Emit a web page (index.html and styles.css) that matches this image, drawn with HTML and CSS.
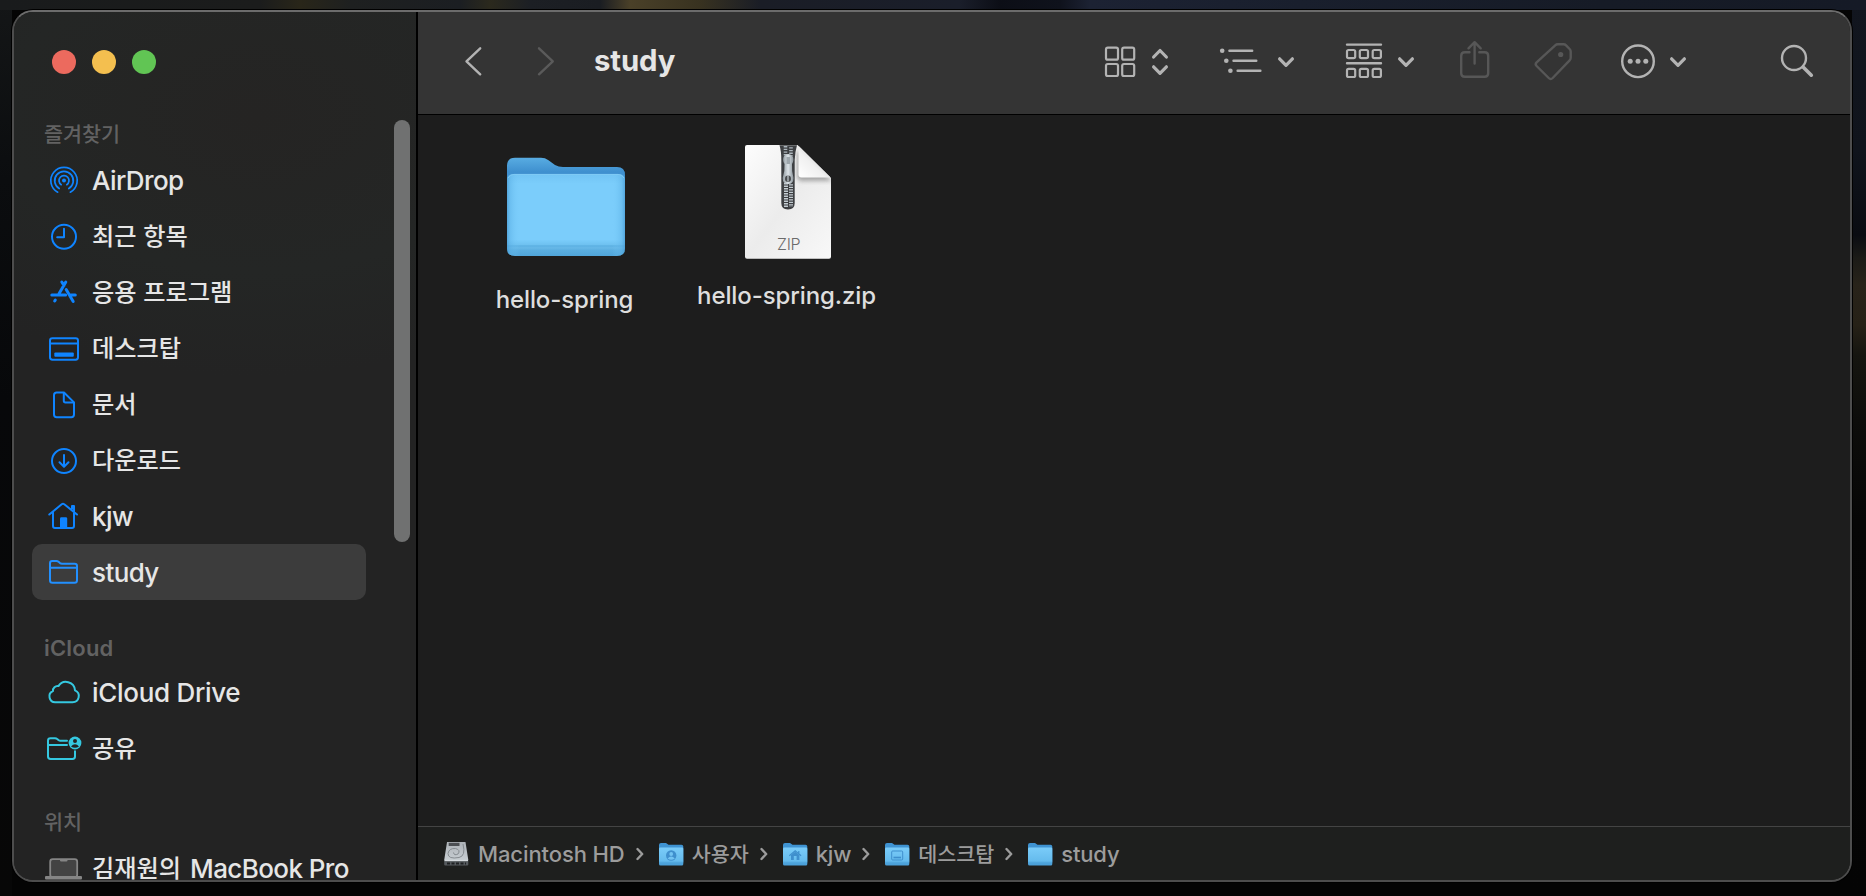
FILE: index.html
```
<!DOCTYPE html>
<html lang="ko">
<head>
<meta charset="utf-8">
<title>study</title>
<link rel="stylesheet" href="styles.css">
</head>
<body>
<svg class="defs" width="0" height="0" aria-hidden="true">
  <defs>
    <linearGradient id="back" x1="0" y1="0" x2="0" y2="1"><stop offset="0" stop-color="#58ace2"/><stop offset=".17" stop-color="#3f90cf"/><stop offset="1" stop-color="#3f90cf"/></linearGradient>
    <linearGradient id="front" x1="0" y1="0" x2="0" y2="1"><stop offset="0" stop-color="#72c4f4"/><stop offset=".12" stop-color="#7bcdfb"/><stop offset=".8" stop-color="#7bcdfb"/><stop offset=".865" stop-color="#6ec1f0"/><stop offset=".875" stop-color="#5bb0e2"/><stop offset=".9" stop-color="#67b8e8"/><stop offset=".93" stop-color="#5aaee0"/><stop offset="1" stop-color="#50a5da"/></linearGradient>
    <linearGradient id="side" x1="0" y1="0" x2="1" y2="0"><stop offset="0" stop-color="#469ad4" stop-opacity=".75"/><stop offset=".03" stop-color="#5bb0e5" stop-opacity=".45"/><stop offset=".11" stop-color="#7bcdfb" stop-opacity="0"/><stop offset=".89" stop-color="#7bcdfb" stop-opacity="0"/><stop offset=".97" stop-color="#5bb0e5" stop-opacity=".45"/><stop offset="1" stop-color="#469ad4" stop-opacity=".75"/></linearGradient>
    <linearGradient id="mini" x1="0" y1="0" x2="0" y2="1"><stop offset="0" stop-color="#7accf9"/><stop offset=".75" stop-color="#65bbed"/><stop offset=".85" stop-color="#4da3db"/><stop offset="1" stop-color="#4a9fd8"/></linearGradient>
    <linearGradient id="paper" x1="0" y1="0" x2="1" y2="1"><stop offset="0" stop-color="#fdfdfd"/><stop offset=".5" stop-color="#ececec"/><stop offset="1" stop-color="#f8f8f8"/></linearGradient>
    <linearGradient id="curl" x1="0" y1="1" x2=".6" y2=".4"><stop offset="0" stop-color="#ffffff"/><stop offset=".7" stop-color="#f0f0f0"/><stop offset="1" stop-color="#d8d8d8"/></linearGradient>
    <linearGradient id="metal" x1="0" y1="0" x2="1" y2="0"><stop offset="0" stop-color="#8e979d"/><stop offset=".5" stop-color="#dce3e8"/><stop offset="1" stop-color="#8b949a"/></linearGradient>
    <linearGradient id="disk" x1="0" y1="0" x2="0" y2="1"><stop offset="0" stop-color="#aeb3b8"/><stop offset="1" stop-color="#c6ccd1"/></linearGradient>
    <filter id="soft" x="-40%" y="-40%" width="180%" height="180%"><feGaussianBlur stdDeviation="2.2"/></filter>
    <g id="minifolder">
      <path d="M0 2.5Q0 .5 2 .5H7L9.5 2.3H22.5Q24.3 2.3 24.3 4V20H0Z" fill="#3f93d2"/>
      <path d="M0 6.2Q0 5 1.2 5H23.1Q24.3 5 24.3 6.2V21.5Q24.3 23 22.8 23H1.5Q0 23 0 21.5Z" fill="url(#mini)"/>
    </g>
  </defs>
</svg>

<div class="window">
  <aside class="sidebar">
    <div class="lights"><i class="light close"></i><i class="light minimize"></i><i class="light expand"></i></div>
    <div class="section first"><span class="ko">즐겨찾기</span></div>
    <ul class="places">
      <li class="place"><svg class="icon" viewBox="0 0 40 40"><circle cx="20" cy="20.500" r="2"/><g class="line thin"><path d="M17.2 24.700A5 5 0 1 1 22.8 24.700"/><path d="M15.2 28.600A9.3 9.3 0 1 1 24.8 28.600"/><path d="M13.7 32.200A13.2 13.2 0 1 1 26.3 32.200"/></g></svg><span class="latin">AirDrop</span></li>
      <li class="place"><svg class="icon" viewBox="0 0 40 40"><g class="line"><circle cx="20" cy="20.7" r="12"/><path d="M20 12.8V21.3H13.2"/></g></svg><span class="ko">최근 항목</span></li>
      <li class="place"><svg class="icon" viewBox="0 0 40 40"><g class="line heavy"><path d="M21.8 10L15 21.800M17.8 10L20 13.500M7.800 23H21.600M11.300 28L10.700 29M22.200 17.500L29.200 29.500M27 23H31.300"/></g></svg><span class="ko">응용 프로그램</span></li>
      <li class="place"><svg class="icon" viewBox="0 0 40 40"><g class="line"><rect x="6" y="10.200" width="28" height="21.5" rx="2.4"/><path d="M6 15.500H34"/></g><rect x="10.3" y="24.500" width="19.5" height="4.2" rx="1"/></svg><span class="ko">데스크탑</span></li>
      <li class="place"><svg class="icon" viewBox="0 0 40 40"><g class="line"><path d="M12.7 8.5H20L30 18.4V30.5Q30 33.2 27.3 33.2H12.7Q10 33.2 10 30.5V11.2Q10 8.5 12.7 8.5Z"/><path d="M19.8 9V16.8Q19.8 18.5 21.5 18.5H29.6"/></g></svg><span class="ko">문서</span></li>
      <li class="place"><svg class="icon" viewBox="0 0 40 40"><g class="line"><circle cx="20" cy="21" r="12"/><path d="M20 15V26M15.5 22.3L20 26.7L24.5 22.3"/></g></svg><span class="ko">다운로드</span></li>
      <li class="place"><svg class="icon" viewBox="0 0 40 40"><g class="line"><path d="M5.3 18.5L17.7 8.3Q19 7.2 20.3 8.3L33 18.5M9 16.2V30Q9 32 11 32H28Q30 32 30 30V10H28V13"/></g><path d="M16 32V22.6Q16 21.2 17.4 21.2H21.8Q23.2 21.2 23.2 22.6V32Z"/></svg><span class="latin">kjw</span></li>
      <li class="place selected"><svg class="icon" viewBox="0 0 40 40"><g class="line"><path d="M6 13V11.2Q6 9 8.2 9H12.5Q13.6 9 14.5 9.8L16 11.1Q16.8 11.7 18 11.7H30.6Q33 11.7 33 14V28.3Q33 30.8 30.6 30.8H8.4Q6 30.8 6 28.3ZM6 15.8H33"/></g></svg><span class="latin">study</span></li>
    </ul>
    <div class="section"><span class="latin">iCloud</span></div>
    <ul class="places cyan">
      <li class="place"><svg class="icon" viewBox="0 0 40 40"><g class="line"><path d="M11.5 30.3H28.5A6.2 6.2 0 0 0 31 18.4A9 9 0 0 0 14.4 14.1A4.8 4.8 0 0 0 8.9 19.2A5.8 5.8 0 0 0 11.5 30.3Z"/></g></svg><span class="latin drive">iCloud Drive</span></li>
      <li class="place"><svg class="icon" viewBox="0 0 40 40"><g class="line"><path d="M23 12.8H16.5Q15.3 12.8 14.4 12L13.2 11Q12.3 10.2 11 10.2H6.5Q4 10.2 4 12.6V28.6Q4 31 6.5 31H28.5Q31 31 31 28.6V23.3M4 17H23"/></g><circle cx="31" cy="15" r="6.4"/><circle class="cut" cx="31" cy="13" r="2"/><path class="cut" d="M27 18.5Q31 13.9 35 18.5Q31 20.9 27 18.5Z"/></svg><span class="ko">공유</span></li>
    </ul>
    <div class="section"><span class="ko">위치</span></div>
    <ul class="places gray">
      <li class="place"><svg class="icon" viewBox="0 0 40 40"><rect class="screen" x="6.2" y="11.2" width="27" height="18" rx="2.5"/><rect x="1" y="28" width="37" height="3.6" rx="1"/><path d="M16 11H23.5V12.5Q23.5 13.6 22.3 13.6H17.2Q16 13.6 16 12.5Z"/></svg><span class="ko">김재원의</span><span class="latin mac">MacBook Pro</span></li>
    </ul>
    <div class="scrollbar"></div>
  </aside>

  <main class="main">
    <header class="toolbar">
      <svg class="tool" width="24" height="44" viewBox="462 39 24 44"><path d="M480.2 48.300L466.5 61.300L480.2 74.300"/></svg>
      <svg class="tool forward" width="24" height="44" viewBox="534 39 24 44"><path d="M539 48.300L552.8 61.300L539 74.300"/></svg>
      <h1 class="title">study</h1>
      <div class="tools">
        <svg class="tool view" width="70" height="44" viewBox="1102 39 70 44"><g class="fine"><rect x="1106" y="47.7" width="12" height="12" rx="1.8"/><rect x="1122.2" y="47.7" width="12" height="12" rx="1.8"/><rect x="1106" y="64" width="12" height="12" rx="1.8"/><rect x="1122.2" y="64" width="12" height="12" rx="1.8"/></g><path class="bold" d="M1153.6 57L1160 50.5L1166.4 57M1153.6 66.8L1160 73.3L1166.4 66.8"/></svg>
        <svg class="tool list" width="80" height="44" viewBox="1217 39 80 44"><path d="M1229.4 50.7H1252.2M1233.5 60.7H1256.3M1237.6 70.7H1260.4"/><g class="fill"><circle cx="1222.2" cy="50.8" r="2.3"/><circle cx="1226.3" cy="60.8" r="2.3"/><circle cx="1230.4" cy="70.8" r="2.3"/></g><path class="bold" d="M1279.6 58.8L1286 65.3L1292.4 58.8"/></svg>
        <svg class="tool group" width="74" height="44" viewBox="1343 39 74 44"><path d="M1347 44.6H1381M1347 63.3H1381"/><g class="fine"><rect x="1347" y="50" width="8.2" height="8.2" rx="1.6"/><rect x="1359.8" y="50" width="8.2" height="8.2" rx="1.6"/><rect x="1372.7" y="50" width="8.2" height="8.2" rx="1.6"/><rect x="1347" y="68.8" width="8.2" height="8.2" rx="1.6"/><rect x="1359.8" y="68.8" width="8.2" height="8.2" rx="1.6"/><rect x="1372.7" y="68.8" width="8.2" height="8.2" rx="1.6"/></g><path class="bold" d="M1399.6 58.8L1406 65.3L1412.4 58.8"/></svg>
        <svg class="tool share off" width="36" height="44" viewBox="1457 39 36 44"><path d="M1469.5 52.3H1464.8Q1461.2 52.3 1461.2 55.9V73.2Q1461.2 76.8 1464.8 76.8H1484.6Q1488.2 76.8 1488.2 73.2V55.9Q1488.2 52.3 1484.6 52.3H1479.3M1474.6 63.5V42.5M1468.5 48.3L1474.6 42.2L1480.7 48.3"/></svg>
        <svg class="tool tag off" width="44" height="44" viewBox="1531 39 44 44"><path d="M1555.2 45.3Q1556.3 44.3 1557.8 44.3H1563.5Q1565 44.3 1566.1 45.4L1569.6 49Q1570.7 50.1 1570.7 51.6V57.8Q1570.7 59.3 1569.6 60.4L1552.7 78Q1550.7 79.9 1548.7 78L1536.6 66Q1534.8 64.2 1536.6 62.4Z"/><circle class="fill" cx="1560.7" cy="54.5" r="2.6"/></svg>
        <svg class="tool more" width="71" height="44" viewBox="1618 39 71 44"><circle cx="1638" cy="61.3" r="15.8"/><g class="fill"><circle cx="1630.2" cy="61.3" r="2.5"/><circle cx="1638" cy="61.3" r="2.5"/><circle cx="1645.8" cy="61.3" r="2.5"/></g><path class="bold" d="M1671.6 58.8L1678 65.3L1684.4 58.8"/></svg>
        <svg class="tool search" width="39" height="44" viewBox="1777 39 39 44"><circle cx="1794" cy="58" r="12"/><path class="handle" d="M1803.3 67.3L1811.3 75.2"/></svg>
      </div>
    </header>

    <section class="files">
      <div class="file folder">
        <svg width="126" height="120" viewBox="503 142 126 120">
          <path d="M507 166Q507 157.8 515 157.8H541Q545 157.8 548.5 160.2L555 165Q558.500 167 563 167H617Q625 167 625 175V240H507Z" fill="url(#back)"/>
          <path d="M507 181Q507 174 514 174H618Q625 174 625 181V248Q625 256 617 256H515Q507 256 507 248Z" fill="url(#front)"/>
          <path d="M507 181Q507 174 514 174H618Q625 174 625 181V248Q625 256 617 256H515Q507 256 507 248Z" fill="url(#side)"/>
          <path d="M508 178Q510 174.400 514 174.400H618Q622 174.400 624 178" fill="none" stroke="#83cdf5" stroke-width=".8"/>
        </svg>
        <span class="name">hello-spring</span>
      </div>
      <div class="file archive">
        <svg width="96" height="120" viewBox="739 142 96 120">
          <path d="M747 145H797.500L831 178V256.700Q831 258.700 829 258.700H747Q745 258.700 745 256.700V147Q745 145 747 145Z" fill="url(#paper)"/>
          <clipPath id="sheet"><path d="M745 145H797.500L831 178V259H745Z"/></clipPath>
          <g clip-path="url(#sheet)"><path d="M797 150V176Q797 181 802 181H832L829 178Z" fill="#777" opacity=".6" filter="url(#soft)"/></g>
          <path d="M798.500 145.800L830.700 177.500H801.500Q798.500 177.500 798.500 174.500Z" fill="url(#curl)"/>
          <path d="M779.500 145.300H797Q795 152 794.700 160V203Q794.700 209.500 788 209.500Q781.300 209.500 781.300 203V160Q781.300 151 779.500 145.300Z" fill="#3d3f42"/>
          <path d="M786 183V207M791 184.200V207" stroke="#c3ccd1" stroke-width="4" stroke-dasharray="1.400 1.100" fill="none"/>
          <path d="M785.500 146V156M791 147.200V156" stroke="#aeb7bd" stroke-width="3.600" stroke-dasharray="1.400 1.300" fill="none"/>
          <path d="M784 156Q788 152 792.500 156Q794.500 160 792 164Q791.500 171 793.500 178Q793.500 184 788 184Q782.700 184 782.700 178Q785 171 784.500 164Q782 160 784 156Z" fill="url(#metal)"/>
          <path d="M786.500 157H790V164H786.500Z" fill="#9da6ac"/>
          <ellipse cx="788" cy="178.700" rx="3" ry="3.200" fill="#4a4d50"/><path d="M788 175.500V181.500" stroke="#c3ccd1" stroke-width="1.200"/>
          <text x="788.600" y="249.800" text-anchor="middle" class="kind">ZIP</text>
        </svg>
        <span class="name">hello-spring.zip</span>
      </div>
    </section>

    <footer class="pathbar">
      <svg class="crumb-icon" width="25" height="26" viewBox="0 0 25 26"><path d="M3 1H21.500L24.300 19H.2Z" fill="url(#disk)"/><path d="M.2 19H24.300V23.500Q24.300 24.600 23.200 24.600H1.300Q.2 24.600 .2 23.500Z" fill="#565a5e"/><path d="M.5 19.500H24" stroke="#d6dade" stroke-width="1.200"/><path d="M4.700 1.800H15.500V5H4.700Z" fill="#4c4f53"/><path d="M19 3Q22 15 15 16.500Q4 18.500 4 12.500Q5 7 11.500 7.500Q17 9 14 13Q10 15 9.500 11.500" fill="none" stroke="#858b90" stroke-width="1"/><path d="M3 22.500H22" stroke="#1f2123" stroke-width="2" stroke-dasharray="3 1.500"/></svg>
      <span class="crumb hd">Macintosh HD</span><svg class="sep" width="8" height="14" viewBox="0 0 8 14"><path d="M1.500 2L6.200 7L1.500 12"/></svg>
      <svg class="crumb-icon" width="25" height="26" viewBox="0 -1.500 25 26"><use href="#minifolder"/><circle cx="12.200" cy="13" r="5.200" fill="#3f8fcd"/><circle cx="12.200" cy="11.500" r="1.900" fill="#72c3f2"/><path d="M8.600 16Q12.200 12 15.800 16Q12.200 18.500 8.600 16Z" fill="#72c3f2"/></svg>
      <span class="crumb ko">사용자</span><svg class="sep" width="8" height="14" viewBox="0 0 8 14"><path d="M1.500 2L6.200 7L1.500 12"/></svg>
      <svg class="crumb-icon" width="25" height="26" viewBox="0 -1.500 25 26"><use href="#minifolder"/><path d="M6.300 13.200L12.200 8.200L18.100 13.200M15.800 11V8.500" fill="none" stroke="#3f8fcd" stroke-width="1.200"/><path d="M8 12.500L12.200 9.200L16.400 12.500V17.500H13.600V13.500H10.800V17.500H8Z" fill="#3f8fcd"/></svg>
      <span class="crumb">kjw</span><svg class="sep" width="8" height="14" viewBox="0 0 8 14"><path d="M1.500 2L6.200 7L1.500 12"/></svg>
      <svg class="crumb-icon" width="25" height="26" viewBox="0 -1.500 25 26"><use href="#minifolder"/><rect x="6.700" y="8.500" width="11" height="9" rx="1" fill="none" stroke="#3f8fcd" stroke-width="1"/><path d="M8.500 15H16" stroke="#3f8fcd" stroke-width="1.600"/></svg>
      <span class="crumb ko">데스크탑</span><svg class="sep" width="8" height="14" viewBox="0 0 8 14"><path d="M1.500 2L6.200 7L1.500 12"/></svg>
      <svg class="crumb-icon" width="25" height="26" viewBox="0 -1.500 25 26"><use href="#minifolder"/></svg>
      <span class="crumb">study</span>
    </footer>
  </main>
</div>
</body>
</html>
```
FILE: styles.css
```
* { box-sizing: border-box; }

body {
  margin: 0;
  height: 896px;
  overflow: hidden;
  padding: 10px 14px 14px 12px;
  font-family: Inter, "Noto Sans CJK KR", sans-serif;
  color: #e6e6e6;
  background:
    linear-gradient(90deg, #191b1c 0, #1b1c1c 260px, #292619 300px, #1e2020 350px, #1b1e22 460px, #2b291d 490px, #1c1f24 530px, #1a1d22 600px, #4a4028 630px, #383220 700px, #1a1d26 760px, #1a1e2a 960px, #0c0e16 1000px, #0f121c 1060px, #1c2233 1090px, #191f2d 1300px, #161b26 1600px, #151a26 1866px) 0 0 / 100% 10px no-repeat,
    linear-gradient(180deg, #12161f 0, #10141c 150px, #0a0c12 235px, #1b1b17 258px, #28231a 285px, #262117 325px, #151510 355px, #0d0d0b 420px, #060606 520px, #040404 100%) 100% 0 / 14px 100% no-repeat,
    linear-gradient(180deg, #141617 0, #0b0d0f 180px, #07080a 400px, #070707 100%) 0 0 / 12px 100% no-repeat,
    #040404;
}

.defs { display: block; position: absolute; }

.window {
  display: flex;
  height: 872px;
  border: 2px solid #4d4d4d;
  border-top-color: #6c6c6c;
  border-radius: 21px;
  overflow: hidden;
  background: #1d1d1d;
  box-shadow: 0 0 0 1px #000;
}

.sidebar {
  position: relative;
  flex: none;
  width: 404px;
  border-right: 2px solid #000;
  background: radial-gradient(420px 260px at 60% 12%, #252423, #242625 60%, #232323);
}

.lights { display: flex; gap: 16px; padding: 38px 0 0 38px; height: 76px; }
.light { width: 24px; height: 24px; border-radius: 50%; }
.close { background: #ec6a5e; }
.minimize { background: #f4bf4f; }
.expand { background: #61c554; }

.section {
  display: flex;
  align-items: flex-end;
  height: 64px;
  padding: 0 0 2px 30px;
  line-height: 28px;
  font-size: 22px;
  font-weight: 600;
  color: #626262;
}
.section .latin { letter-spacing: .2px; }
.section .ko { font-size: 20.700px; font-weight: 500; padding-bottom: 3px; }

.places { list-style: none; margin: 0; padding: 0 50px 0 18px; color: #0f84ff; }
.cyan { color: #35c8e0; }
.gray { color: #858585; }
.place { display: flex; align-items: center; height: 56px; padding-left: 12px; border-radius: 10px; }
.selected { background: #3c3c3c; color: #2290ff; }
.icon { flex: none; width: 40px; height: 40px; margin-right: 8px; fill: currentColor; }
.line { fill: none; stroke: currentColor; stroke-width: 2; stroke-linecap: round; stroke-linejoin: round; }
.thin { stroke-width: 1.700; }
.heavy { stroke-width: 3; }
.cut { fill: #232323; }
.screen { fill: #434343; stroke: currentColor; stroke-width: 1.800; }
.place span { color: #e6e6e6; white-space: nowrap; }
.place .latin { font-size: 26px; font-weight: 450; letter-spacing: -.6px; }
.place .drive { letter-spacing: -.3px; }
.place .ko { font-size: 24.200px; font-weight: 500; line-height: 32px; padding-bottom: 3px; }
.place .mac { margin-left: 9px; }
.ko { font-family: "Noto Sans CJK KR", sans-serif; }

.scrollbar {
  position: absolute;
  top: 108px;
  right: 6px;
  width: 16px;
  height: 422px;
  border-radius: 8px;
  background: #707171;
}

.main { flex: 1; display: flex; flex-direction: column; min-width: 0; }

.toolbar {
  display: flex;
  align-items: center;
  flex: none;
  height: 103px;
  padding: 0 34px 5px 44px;
  background: #343434;
  border-bottom: 1px solid #000;
}
.tool { display: block; flex: none; fill: none; stroke: #b3b3b3; stroke-width: 2.400; stroke-linecap: round; stroke-linejoin: round; }
.forward { margin-left: 48px; stroke: #5a5a5a; }
.title { margin: 0 0 0 36px; padding-top: 1px; font-size: 29.300px; line-height: 44px; font-weight: 700; letter-spacing: -.1px; }
.tools { display: flex; margin-left: auto; }
.fine { stroke-width: 2.200; }
.bold { stroke-width: 3.200; }
.handle { stroke-width: 3.600; }
.fill { fill: #b3b3b3; stroke: none; }
.off { stroke: #575757; }
.off .fill { fill: #575757; }
.list { margin-left: 45px; }
.group { margin-left: 46px; }
.share { margin-left: 40px; }
.tag { margin-left: 38px; }
.more { margin-left: 43px; }
.search { margin-left: 88px; }

.files { flex: 1; display: grid; grid-template-columns: 221px 221px; align-content: start; padding: 27px 0 0 37px; }
.file { display: flex; flex-direction: column; align-items: center; }
.name { font-size: 24px; line-height: 30px; font-weight: 450; letter-spacing: -.1px; color: #dedede; white-space: nowrap; }
.folder .name { margin: 23px 2px 0 0; }
.archive .name { margin-top: 19px; }
.kind { font: 300 16px Inter, sans-serif; letter-spacing: -.4px; fill: #6b6b6b; }

.pathbar {
  display: flex;
  align-items: center;
  flex: none;
  height: 54px;
  padding-left: 26px;
  border-top: 1px solid #444;
  background: #1e1f1e;
  color: #9c9c9c;
}
.crumb { margin-left: 8px; font-size: 22px; line-height: 30px; font-weight: 450; letter-spacing: -.2px; white-space: nowrap; }
.hd { margin-left: 9px; letter-spacing: -.1px; }
.crumb.ko { font-size: 20.700px; font-weight: 500; letter-spacing: 0; padding-bottom: 2px; }
.sep { margin: 0 15px 0 11px; fill: none; stroke: #9c9c9c; stroke-width: 2.400; stroke-linecap: round; stroke-linejoin: round; }
.crumb-icon { flex: none; }
```
